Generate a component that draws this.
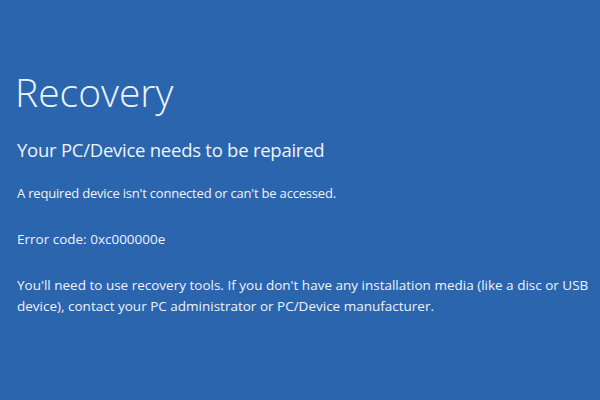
export default function App() {
  return (
    <div
      className="w-[600px] h-[400px] bg-[#2a65ae] text-[#eef3fa] overflow-hidden pl-[15px]"
      style={{ fontFamily: '"Open Sans", "Noto Sans", sans-serif' }}
    >
      <h1 className="pt-[66px] text-[39px] leading-[52px] font-light">Recovery</h1>
      <h2 className="mt-[19px] pl-[2px] text-[18.5px] leading-[26px] font-normal tracking-[-0.25px]">
        Your PC/Device needs to be repaired
      </h2>
      <p className="mt-[20px] pl-[2px] text-[13px] leading-[20px] tracking-[-0.2px]">
        A required device isn't connected or can't be accessed.
      </p>
      <p className="mt-[26px] pl-[2px] text-[13.5px] leading-[20px]">Error code: 0xc000000e</p>
      <p className="mt-[26px] pl-[2px] w-[580px] text-[13.5px] leading-[21px]">
        You'll need to use recovery tools. If you don't have any installation media (like a disc or USB
        device), contact your PC administrator or PC/Device manufacturer.
      </p>
    </div>
  );
}
